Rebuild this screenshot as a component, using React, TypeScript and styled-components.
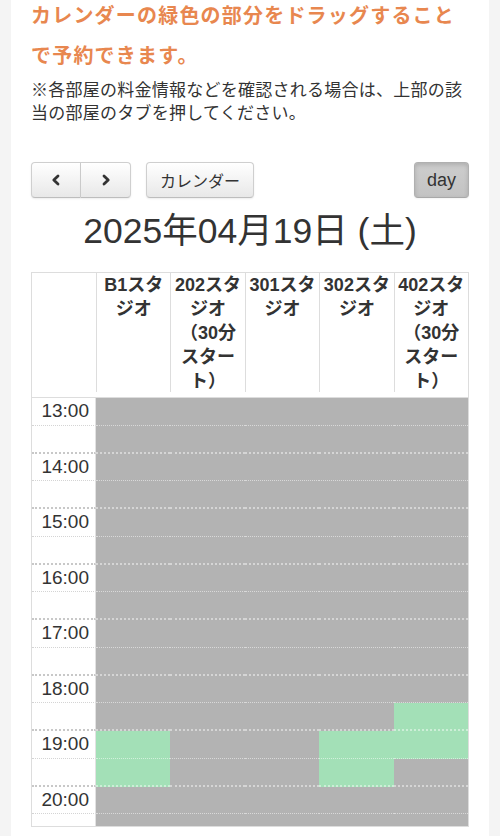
import React from 'react';
import styled, { createGlobalStyle } from 'styled-components';

const GlobalStyle = createGlobalStyle`
  body {
    margin: 0;
    background: #f4f4f4;
    font-family: "Liberation Sans", "Noto Sans CJK JP", sans-serif;
    color: #333;
  }
`

const Page = styled.div`
  padding: 0 11px;
`

const Panel = styled.main`
  background: #fff;
  padding: 0 20px;
  height: 836px;
  overflow: hidden;
`

const Lead = styled.h2`
  margin: -5px 0 0;
  font-family: "Noto Sans CJK JP", sans-serif;
  font-size: 20px;
  font-weight: 700;
  line-height: 40px;
  letter-spacing: 1.2px;
  color: #e8874f;
`

const Note = styled.p`
  margin: 2px 0 0;
  font-family: "Noto Sans CJK JP", sans-serif;
  font-size: 17px;
  line-height: 23px;
  letter-spacing: 0.25px;
  color: #333;
`

const Toolbar = styled.div`
  display: flex;
  align-items: center;
  margin-top: 39px;
`

const ButtonGroup = styled.div`
  display: flex;
  margin-right: 15px;
`

const Button = styled.button<{ $active?: boolean; $width: number; $join?: 'left' | 'right' }>`
  box-sizing: border-box;
  display: flex;
  align-items: center;
  justify-content: center;
  width: ${p => p.$width}px;
  height: 36px;
  padding: 0;
  border: 1px solid ${p => (p.$active ? '#b0b0b0' : '#cfcfcf')};
  border-bottom-color: ${p => (p.$active ? '#a8a8a8' : '#bdbdbd')};
  border-radius: ${p => (p.$join === 'left' ? '4px 0 0 4px' : p.$join === 'right' ? '0 4px 4px 0' : '4px')};
  ${p => (p.$join === 'right' ? 'border-left: none;' : '')}
  background: ${p => (p.$active ? 'linear-gradient(#cdcdcd, #c3c3c3)' : 'linear-gradient(#ffffff, #e8e8e8)')};
  box-shadow: ${p => (p.$active ? 'inset 0 2px 4px rgba(0,0,0,.15), 0 1px 2px rgba(0,0,0,.05)' : 'inset 0 1px 0 rgba(255,255,255,.2), 0 1px 2px rgba(0,0,0,.08)')};
  font-family: "Liberation Sans", "Noto Sans CJK JP", sans-serif;
  font-size: ${p => (p.$active ? 18 : 16)}px;
  color: #333;
  cursor: pointer;
`

const Spacer = styled.div`
  flex: 1;
`

const Title = styled.h1`
  margin: 12px 0 20px;
  text-align: center;
  font-size: 35.5px;
  font-weight: 400;
  line-height: 42px;
  color: #333;
`

const Calendar = styled.div`
  border: 1px solid #ddd;
`

const HeaderRow = styled.div`
  display: grid;
  grid-template-columns: 64px repeat(5, 1fr);
  padding-bottom: 5px;
  border-bottom: 1px solid #ddd;
`

const HeaderCell = styled.div<{ $first?: boolean }>`
  height: 119px;
  border-left: ${p => (p.$first ? 'none' : '1px solid #ddd')};
  text-align: center;
  white-space: nowrap;
  font-size: 18px;
  font-weight: 700;
  line-height: 24px;
  color: #333;
`

const Body = styled.div`
  display: grid;
  grid-template-columns: 64px repeat(5, 1fr);
  height: 428px;
  overflow: hidden;
`

const Column = styled.div`
  display: flex;
  flex-direction: column;
`

const TimeSlot = styled.div<{ $major: boolean }>`
  box-sizing: border-box;
  flex: none;
  height: 27.75px;
  display: flex;
  align-items: center;
  justify-content: flex-end;
  padding-right: 6px;
  border-right: 1px solid #e2e2e2;
  border-bottom: ${p => (p.$major ? '2px dotted #c8c8c8' : '1px dotted #d4d4d4')};
  font-size: 19px;
  color: #333;
`

const Slot = styled.div<{ $major: boolean; $open: boolean }>`
  box-sizing: border-box;
  flex: none;
  height: 27.75px;
  background: ${p => (p.$open ? '#a3e0b7' : '#b3b3b3')};
  border-bottom: ${p => (p.$major ? '2px dotted rgba(255,255,255,.45)' : '1px dotted rgba(255,255,255,.5)')};
`

const Chevron = ({ dir }: { dir: 'left' | 'right' }) => (
  <svg width="12" height="14" viewBox="0 0 12 14">
    <polyline
      points={dir === 'left' ? '8,3 3.8,7 8,11' : '4,3 8.2,7 4,11'}
      fill="none"
      stroke="#333"
      strokeWidth="2.8"
      strokeLinecap="round"
      strokeLinejoin="round"
    />
  </svg>
)

// header names broken where the reference breaks them
const resources = [
  { lines: ['B1スタ', 'ジオ'], open: [12, 13] },
  { lines: ['202スタ', 'ジオ', '（30分', 'スター', 'ト）'], open: [] as number[] },
  { lines: ['301スタ', 'ジオ'], open: [] as number[] },
  { lines: ['302スタ', 'ジオ'], open: [12, 13] },
  { lines: ['402スタ', 'ジオ', '（30分', 'スター', 'ト）'], open: [11, 12] },
]

const SLOTS = 16
const startHour = 13

export default function App() {
  const slots = Array.from({ length: SLOTS }, (_, i) => i)
  return (
    <>
      <GlobalStyle />
      <Page>
        <Panel>
          <Lead>カレンダーの緑色の部分をドラッグすることで予約できます。</Lead>
          <Note>※各部屋の料金情報などを確認される場合は、上部の該当の部屋のタブを押してください。</Note>

          <Toolbar>
            <ButtonGroup>
              <Button $width={50} $join="left" aria-label="prev"><Chevron dir="left" /></Button>
              <Button $width={50} $join="right" aria-label="next"><Chevron dir="right" /></Button>
            </ButtonGroup>
            <Button $width={108}>カレンダー</Button>
            <Spacer />
            <Button $width={55} $active>day</Button>
          </Toolbar>

          <Title>2025年04月19日 (土)</Title>

          <Calendar>
            <HeaderRow>
              <HeaderCell $first />
              {resources.map(r => (
                <HeaderCell key={r.lines[0]}>
                  {r.lines.map((l, i) => (
                    <React.Fragment key={i}>
                      {i > 0 && <br />}
                      {l}
                    </React.Fragment>
                  ))}
                </HeaderCell>
              ))}
            </HeaderRow>
            <Body>
              <Column>
                {slots.map(i => (
                  <TimeSlot key={i} $major={i % 2 === 1}>
                    {i % 2 === 0 ? `${startHour + i / 2}:00` : ''}
                  </TimeSlot>
                ))}
              </Column>
              {resources.map(r => (
                <Column key={r.lines[0]}>
                  {slots.map(i => (
                    <Slot key={i} $major={i % 2 === 1} $open={r.open.includes(i)} />
                  ))}
                </Column>
              ))}
            </Body>
          </Calendar>
        </Panel>
      </Page>
    </>
  )
}
